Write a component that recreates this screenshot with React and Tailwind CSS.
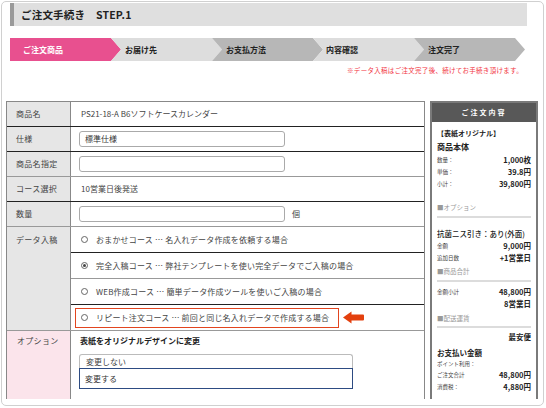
import React from "react";

// order-flow step chevrons
const steps = [
  { label: "ご注文商品", cls: "bg-[#e8508f] text-white [clip-path:polygon(0_0,101px_0,111px_50%,101px_100%,0_100%)] pl-[13px]" },
  { label: "お届け先", cls: "bg-[#dddddd] text-[#222] [clip-path:polygon(0_0,101px_0,111px_50%,101px_100%,0_100%,10px_50%)] pl-[14px] -ml-[10px]" },
  { label: "お支払方法", cls: "bg-[#b7b7b7] text-[#222] [clip-path:polygon(0_0,101px_0,111px_50%,101px_100%,0_100%,10px_50%)] pl-[14px] -ml-[10px]" },
  { label: "内容確認", cls: "bg-[#dddddd] text-[#222] [clip-path:polygon(0_0,101px_0,111px_50%,101px_100%,0_100%,10px_50%)] pl-[13px] -ml-[10px]" },
  { label: "注文完了", cls: "bg-[#b7b7b7] text-[#222] [clip-path:polygon(0_0,101px_0,111px_50%,101px_100%,0_100%,10px_50%)] pl-[14px] -ml-[10px]" },
];

function Row({ label, border, children }) {
  return (
    <div className={`flex h-[25px] border-b ${border}`}>
      <div className="w-[64px] shrink-0 border-r border-[#888] bg-[#e6e6e6] pl-[9px] flex items-center text-[8px] tracking-[0.3px] text-[#444]">
        {label}
      </div>
      <div className="flex-1 flex items-center text-[8px] text-[#444]">{children}</div>
    </div>
  );
}

function TextBox({ value }) {
  return (
    <div className="ml-[8px] w-[206px] h-[16px] rounded-[3px] border border-[#aaa] bg-white flex items-center pl-[5px] text-[8px] text-[#333]">
      {value}
    </div>
  );
}

function Radio({ checked }) {
  return (
    <span className="w-[7px] h-[7px] rounded-full border border-[#666] flex items-center justify-center shrink-0">
      {checked && <span className="w-[3px] h-[3px] rounded-full bg-[#444]" />}
    </span>
  );
}

function Course({ checked, text, border }) {
  return (
    <div className={`h-[26px] flex items-center pl-[10px] border-b ${border}`}>
      <Radio checked={checked} />
      <span className="ml-[8px] text-[8px] tracking-[0.2px] text-[#444] whitespace-nowrap">{text}</span>
    </div>
  );
}

function OrderTable() {
  return (
    <div className="ml-[4px] w-[419px] shrink-0 border-t border-x border-[#888]">
      <Row label="商品名" border="border-[#222]">
        <span className="pl-[10px]">PS21-18-A B6ソフトケースカレンダー</span>
      </Row>
      <Row label="仕様" border="border-[#222]">
        <TextBox value="標準仕様" />
      </Row>
      <Row label="商品名指定" border="border-[#999]">
        <TextBox value="" />
      </Row>
      <Row label="コース選択" border="border-[#222]">
        <span className="pl-[10px]">10営業日後発送</span>
      </Row>
      <Row label="数量" border="border-[#999]">
        <TextBox value="" />
        <span className="ml-[7px]">個</span>
      </Row>

      {/* data submission courses */}
      <div className="flex h-[104px] border-b border-[#999]">
        <div className="w-[64px] shrink-0 border-r border-[#888] bg-[#e6e6e6] pl-[9px]">
          <div className="h-[26px] flex items-center text-[8px] tracking-[0.3px] text-[#444]">データ入稿</div>
        </div>
        <div className="flex-1 flex flex-col">
          <Course text="おまかせコース … 名入れデータ作成を依頼する場合" border="border-[#222]" />
          <Course checked text="完全入稿コース … 弊社テンプレートを使い完全データでご入稿の場合" border="border-[#999]" />
          <Course text="WEB作成コース … 簡単データ作成ツールを使いご入稿の場合" border="border-[#222]" />
          <div className="flex-1 flex items-center pl-[4px]">
            <div className="w-[264px] h-[20px] border border-[#e2451f] flex items-center pl-[5px]">
              <Radio />
              <span className="ml-[8px] text-[8px] tracking-[0.2px] text-[#444] whitespace-nowrap">
                リピート注文コース … 前回と同じ名入れデータで作成する場合
              </span>
            </div>
            <svg className="ml-[4px]" width="21" height="13" viewBox="0 0 21 13">
              <path d="M0 6.5 L8.5 0.5 L8.5 3.5 L20 3.5 Q21 3.5 21 4.5 L21 8.5 Q21 9.5 20 9.5 L8.5 9.5 L8.5 12.5 Z" fill="#e3400e" />
            </svg>
          </div>
        </div>
      </div>

      {/* option row */}
      <div className="flex h-[80px]">
        <div className="w-[64px] shrink-0 border-r border-[#888] bg-[#fbe4eb] pl-[10px]">
          <div className="h-[19px] flex items-center text-[8px] tracking-[0.3px] text-[#444]">オプション</div>
        </div>
        <div className="flex-1 pl-[9px]">
          <div className="mt-[4px] h-[12px] flex items-center text-[8px] font-bold text-[#222]">
            表紙をオリジナルデザインに変更
          </div>
          <div className="mt-[7px] w-[274px] -ml-[1px]">
            <div className="h-[14px] border border-b-0 border-[#bbb] rounded-t-[3px] pl-[6px] flex items-center text-[8px] text-[#444]">
              変更しない
            </div>
            <div className="h-[21px] border border-[#2d4b82] pl-[5px] flex items-center text-[8px] text-[#333]">
              変更する
            </div>
          </div>
        </div>
      </div>
    </div>
  );
}

function KV({ k, v, h = "h-[12px]", mt = "" }) {
  return (
    <div className={`flex items-center justify-between ${h} ${mt}`}>
      <span className="text-[5.5px] text-[#444]">{k}</span>
      <span className="text-[7.5px] font-bold text-[#222]">{v}</span>
    </div>
  );
}

function Section({ title, h, mt = "" }) {
  return (
    <div className={`${h} ${mt} border-b-2 border-[#dcdcdc] flex items-center text-[6.5px] text-[#999]`}>
      ■{title}
    </div>
  );
}

function Summary() {
  return (
    <div className="ml-[5px] w-[108px] h-[310px] shrink-0 border-2 border-[#7a7a7a]">
      <div className="h-[19px] bg-[#585858] text-white text-[7px] font-bold tracking-[2px] flex items-center justify-center">
        ご注文内容
      </div>
      <div className="px-[5px]">
        <div className="mt-[4px] h-[14px] flex items-center text-[7px] font-bold text-[#222]">【表紙オリジナル】</div>
        <div className="h-[14px] flex items-center text-[8px] font-bold text-[#222]">商品本体</div>
        <KV k="数量：" v="1,000枚" />
        <KV k="単価：" v="39.8円" />
        <KV k="小計：" v="39,800円" />
        <Section title="オプション" h="h-[18px]" mt="mt-[10px]" />
        <div className="mt-[10px] h-[12px] flex items-center text-[7.5px] font-medium text-[#222] whitespace-nowrap">
          抗菌ニス引き：あり(外面)
        </div>
        <KV k="金額" v="9,000円" />
        <KV k="追加日数" v="+1営業日" />
        <Section title="商品合計" h="h-[18px]" />
        <KV k="金額小計" v="48,800円" mt="mt-[4px]" />
        <KV k="" v="8営業日" />
        <Section title="配送運賃" h="h-[16px]" mt="mt-[2px]" />
        <KV k="" v="最安便" mt="mt-[3px]" />
        <div className="mt-[4px] h-[12px] flex items-center text-[7.5px] font-bold text-[#222]">お支払い金額</div>
        <div className="h-[10px] flex items-center text-[5.5px] text-[#444]">ポイント利用：</div>
        <KV k="ご注文合計" v="48,800円" />
        <KV k="消費税：" v="4,880円" />
      </div>
    </div>
  );
}

export default function App() {
  return (
    <div className="w-[546px] h-[408px] bg-white overflow-hidden font-['Noto_Sans_CJK_JP','Noto_Sans',sans-serif] text-[#333]">
      <div className="ml-px mt-px w-[543px] h-[405px] border border-[#d0d0d0] rounded-[5px]">
        <div className="h-[397px] overflow-hidden">
          {/* title bar */}
          <div className="ml-[8px] mt-[1px] w-[517px] h-[23px] bg-[#dfdfdf] border-l-[4px] border-[#9a9a9a] flex items-center pl-[7px] text-[10.5px] font-semibold text-[#222] tracking-[0.2px]">
            ご注文手続き　STEP.1
          </div>

          {/* steps */}
          <div className="ml-[8px] mt-[12px] h-[23px] flex">
            {steps.map((s) => (
              <div key={s.label} className={`w-[111px] h-[23px] shrink-0 flex items-center text-[8px] font-bold ${s.cls}`}>
                {s.label}
              </div>
            ))}
          </div>

          <div className="mt-[5px] h-[9px] pr-[20px] text-right text-[6.5px] tracking-[0.3px] leading-[9px] text-[#f2363f]">
            ※データ入稿はご注文完了後、続けてお手続き頂けます。
          </div>

          <div className="mt-[26px] flex items-start">
            <OrderTable />
            <Summary />
          </div>
        </div>
      </div>
    </div>
  );
}
